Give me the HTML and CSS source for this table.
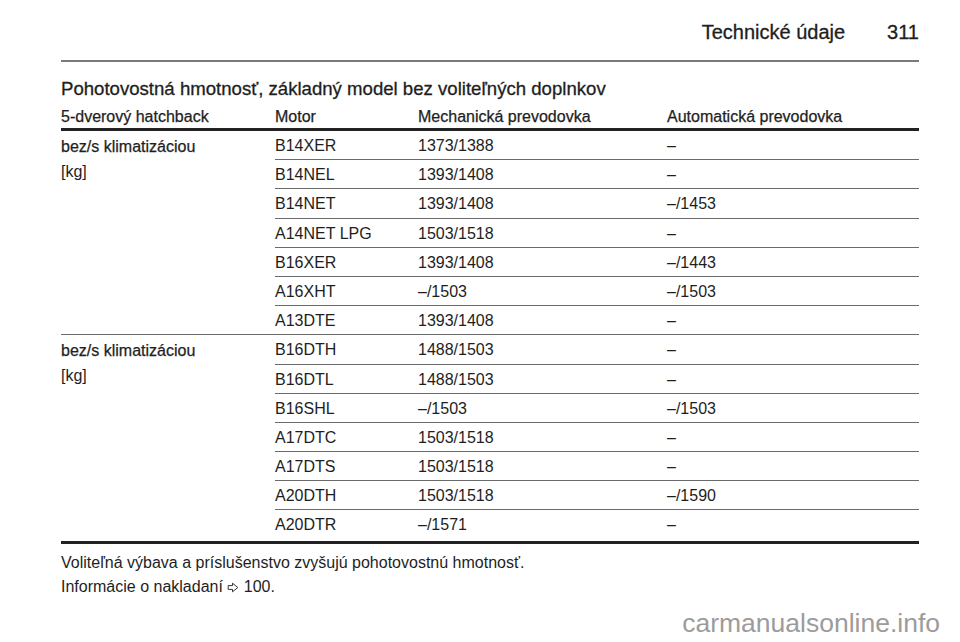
FILE: index.html
```html
<!DOCTYPE html>
<html lang="sk">
<head>
<meta charset="utf-8">
<title>Technické údaje 311</title>
<link rel="stylesheet" href="styles.css">
</head>
<body>
<div class="page">
  <header class="running-head">
    <span class="section">Technické údaje</span>
    <span class="folio">311</span>
  </header>
  <h1 class="title">Pohotovostná hmotnosť, základný model bez voliteľných doplnkov</h1>
  <table class="weights">
    <colgroup>
      <col class="c1"><col class="c2"><col class="c3"><col class="c4">
    </colgroup>
    <thead>
      <tr><th>5-dverový hatchback</th><th>Motor</th><th>Mechanická prevodovka</th><th>Automatická prevodovka</th></tr>
    </thead>
    <tbody>
      <tr><td class="group" rowspan="7"><span class="strong">bez/s klimatizáciou</span><br>[kg]</td><td>B14XER</td><td>1373/1388</td><td>–</td></tr>
      <tr><td>B14NEL</td><td>1393/1408</td><td>–</td></tr>
      <tr><td>B14NET</td><td>1393/1408</td><td>–/1453</td></tr>
      <tr><td>A14NET LPG</td><td>1503/1518</td><td>–</td></tr>
      <tr><td>B16XER</td><td>1393/1408</td><td>–/1443</td></tr>
      <tr><td>A16XHT</td><td>–/1503</td><td>–/1503</td></tr>
      <tr><td>A13DTE</td><td>1393/1408</td><td>–</td></tr>
    </tbody>
    <tbody class="last">
      <tr><td class="group" rowspan="7"><span class="strong">bez/s klimatizáciou</span><br>[kg]</td><td>B16DTH</td><td>1488/1503</td><td>–</td></tr>
      <tr><td>B16DTL</td><td>1488/1503</td><td>–</td></tr>
      <tr><td>B16SHL</td><td>–/1503</td><td>–/1503</td></tr>
      <tr><td>A17DTC</td><td>1503/1518</td><td>–</td></tr>
      <tr><td>A17DTS</td><td>1503/1518</td><td>–</td></tr>
      <tr><td>A20DTH</td><td>1503/1518</td><td>–/1590</td></tr>
      <tr><td>A20DTR</td><td>–/1571</td><td>–</td></tr>
    </tbody>
  </table>
  <p class="note first">Voliteľná výbava a príslušenstvo zvyšujú pohotovostnú hmotnosť.</p>
  <p class="note">Informácie o nakladaní <svg class="ref-arrow" width="12" height="11" viewBox="0 0 12 11" aria-hidden="true"><path d="M1.2 3.6 H5.5 V1.2 L10.8 5.5 L5.5 9.8 V7.4 H1.2 Z" fill="none" stroke="#333" stroke-width="1"/></svg> 100.</p>
  <div class="watermark">carmanualsonline.info</div>
</div>
</body>
</html>
```
FILE: styles.css
```css
html, body {
  margin: 0;
  padding: 0;
  background: #ffffff;
}

body {
  font-family: "Liberation Sans", Arial, sans-serif;
  color: #1e1e1e;
}

.page {
  position: relative;
  width: 960px;
  height: 642px;
  box-sizing: border-box;
  padding: 0 41px 0 61px;
  overflow: hidden;
}

.running-head {
  display: flex;
  justify-content: flex-end;
  gap: 42px;
  padding: 20px 0 16px;
  border-bottom: 2px solid #7a7a7a;
  font-size: 20px;
  line-height: 24px;
  -webkit-text-stroke: 0.3px #1e1e1e;
}

.title {
  margin: 0;
  padding: 16px 0 0;
  font-size: 18.6px;
  line-height: 22px;
  font-weight: normal;
  -webkit-text-stroke: 0.3px #1e1e1e;
}

.weights {
  width: 100%;
  border-collapse: collapse;
  font-size: 16px;
  margin-top: 7px;
}

.weights col.c1 { width: 214px; }
.weights col.c2 { width: 143px; }
.weights col.c3 { width: 249px; }

.weights th {
  text-align: left;
  font-weight: normal;
  -webkit-text-stroke: 0.25px #1e1e1e;
  padding: 0 0 1px;
  line-height: 20px;
  border-bottom: 3px solid #222;
}

.weights td {
  padding: 5px 0 3.2px;
  line-height: 20px;
  vertical-align: top;
  border-bottom: 1px solid #6a6a6a;
}

.weights td.group {
  line-height: 25px;
  padding-top: 2.5px;
}

.weights .strong {
  -webkit-text-stroke: 0.25px #1e1e1e;
}

.weights tbody.last tr:last-child td {
  padding-bottom: 5.2px;
}

.weights tbody.last tr:last-child td,
.weights tbody.last td.group {
  border-bottom: 3px solid #222;
}

.note {
  margin: 0;
  font-size: 16px;
  line-height: 24px;
}

.note.first {
  margin-top: 7px;
}

.ref-arrow {
  vertical-align: -1px;
}

.watermark {
  position: absolute;
  right: 20px;
  bottom: 4px;
  font-size: 26.5px;
  line-height: 30px;
  color: #9c9c9c;
}
```
